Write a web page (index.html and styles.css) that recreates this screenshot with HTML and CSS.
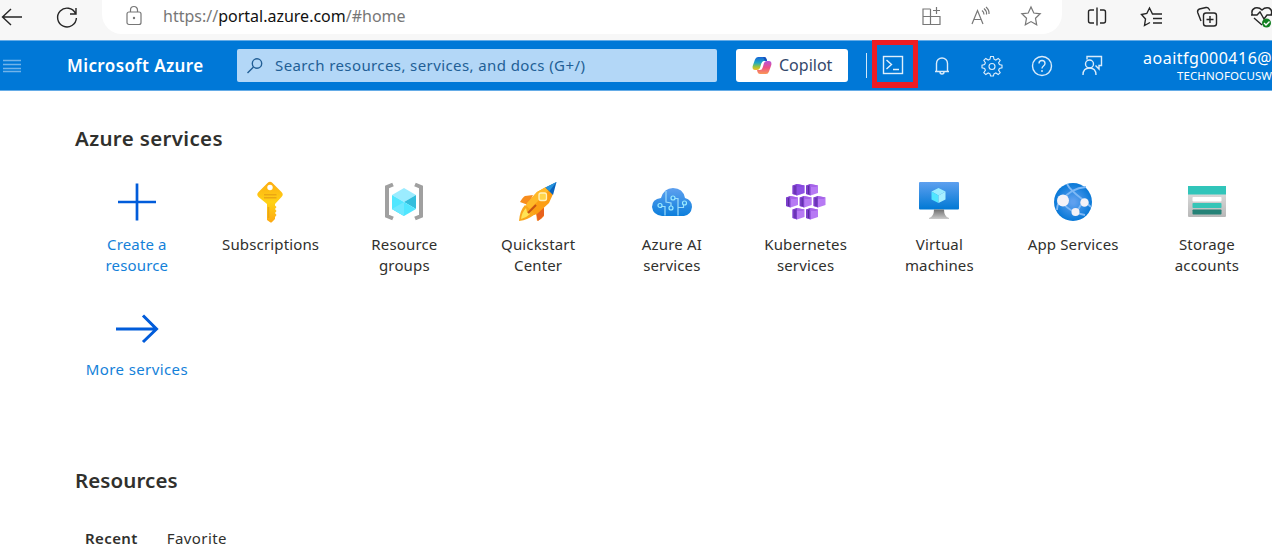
FILE: index.html
```html
<!DOCTYPE html>
<html lang="en">
<head>
<meta charset="utf-8">
<title>Home - Microsoft Azure</title>
<link rel="stylesheet" href="styles.css">
</head>
<body>
<div class="browser">
  <svg class="back" width="24" height="24" viewBox="0 0 24 24"><path d="M22 12H3M11 4l-8.500 8L11 20"/></svg>
  <svg class="reload" width="24" height="24" viewBox="0 0 24 24"><path d="M20.500 8.500A9.400 9.400 0 1 0 21.400 13M21 3v6h-6"/></svg>
  <div class="address">
    <svg class="lock" width="18" height="22" viewBox="0 0 18 22"><rect x="2" y="7" width="14" height="12.500" rx="2"/><path d="M5.500 7V5a3.500 3.500 0 0 1 7 0v2"/><circle cx="9" cy="13" r=".6"/></svg>
    <div class="url"><span class="scheme">https://</span><b>portal.azure.com</b><span class="path">/#home</span></div>
    <svg class="apps" width="22" height="22" viewBox="0 0 22 22"><path d="M10.500 4H3v15.500h17V11.500H3M10.500 4V19.500M16.500 2v7M13 5.500h7"/></svg>
    <svg class="read" width="22" height="22" viewBox="0 0 22 22"><path d="M2 19 7.500 5.500 13 19M4 14.500h7M12 5.500q2 1.500 2 4M14 3.500q3 2.500 2.500 6M16 2q3.500 3 3 7"/></svg>
    <svg class="star" width="22" height="22" viewBox="0 0 22 22"><path d="m11 2 2.800 6 6.400.8-4.700 4.500 1.200 6.500-5.700-3.200-5.700 3.200 1.200-6.500L1.800 8.800 8.200 8z"/></svg>
  </div>
  <svg class="split" width="22" height="22" viewBox="0 0 22 22"><path d="M8 4H4.500q-2 0-2 2v9q0 2 2 2H8M14 4h3.500q2 0 2 2v9q0 2-2 2H14M11 1.500v18"/></svg>
  <svg class="favs" width="24" height="22" viewBox="0 0 24 22"><path d="M17 8H12.500L9.500 2 6.800 7.500 1.500 8.500l4 4.500L4.500 19.500 10 16.500M14 8h8M13 12.500h9M13 17h9"/></svg>
  <svg class="collections" width="22" height="22" viewBox="0 0 22 22"><rect x="7.500" y="7" width="13" height="13" rx="2.500"/><path d="M14 10v7M10.500 13.500h7M5 15 1.700 6.500Q1 4 3.500 3L10 1.500q2-.4 3 1.500l.8 1.500"/></svg>
  <svg class="health" width="24" height="24" viewBox="0 0 24 24"><path d="M12 20 4 13M2.500 10Q.5 5 5 3q4-1 7 2 3-3 7-2 4 2 2 7M1 10h6l3-3 4 7 3-4h6"/><circle class="ok" cx="16.500" cy="18" r="4.500"/><path class="tick" d="m14 18 2 2 3.500-3.500"/></svg>
</div>

<header class="topbar">
  <svg class="menu" width="20" height="16" viewBox="0 0 20 16"><path d="M0 2.500h18M0 6.500h18M0 10.500h18M0 13.500h18"/></svg>
  <div class="brand">Microsoft Azure</div>
  <div class="search">
    <svg width="18" height="18" viewBox="0 0 18 18"><circle cx="11" cy="6.500" r="4.700"/><path d="M7.500 10 1.500 16"/></svg>
    <span>Search resources, services, and docs (G+/)</span>
  </div>
  <div class="copilot">
    <svg width="20" height="19" viewBox="0 0 20 19">
      <defs>
        <linearGradient id="cpA" x2="0" y2="1"><stop stop-color="#1664d8"/><stop offset=".45" stop-color="#20a9c5"/><stop offset=".75" stop-color="#9bc43c"/><stop offset="1" stop-color="#f8bd25"/></linearGradient>
        <linearGradient id="cpB" x2="0" y2="1"><stop stop-color="#b454dc"/><stop offset=".5" stop-color="#ed5085"/><stop offset="1" stop-color="#fa9855"/></linearGradient>
      </defs>
      <path fill="url(#cpA)" d="M6 1h6q2 0 2.500 2L15 5h-3Q10 5 9.300 7.500L8 12q-.7 2-3 2H3Q0 14 .7 10L3 3.500Q3.800 1 6 1"/>
      <path fill="url(#cpB)" d="M14 18H8q-2 0-2.500-2L5 14h3q2 0 2.700-2.500L12 7q.7-2 3-2h2q3 0 2.300 4L17 15.500q-.8 2.500-3 2.500"/>
      <path fill="#1750b8" d="M11 1h1q2 0 2.500 2l.6 2H14q-1.500 0-2-2z"/>
    </svg>
    <span>Copilot</span>
  </div>
  <i class="divider"></i>
  <div class="shell"><svg width="22" height="20" viewBox="0 0 22 20"><rect x="1.500" y="1.500" width="19" height="17"/><path d="m4.500 5 5 4.500-5 4.500M11 14.500h6"/></svg></div>
  <svg class="tool" width="22" height="22" viewBox="0 0 22 22"><path d="M5.500 16V8.500a5.500 5.500 0 0 1 11 0V16M4 16.500h14M9 17q0 2 2 2t2-2"/></svg>
  <svg class="tool gear" width="22" height="22" viewBox="0 0 22 22"><path d="M9.600 1.500h2.800l.6 2.700 1.800.8 2.400-1.600 2 2-1.600 2.400.8 1.800 2.600.6v2.600l-2.600.6-.8 1.800 1.600 2.400-2 2-2.400-1.600-1.800.8-.6 2.200H9.600L9 18.800 7.200 18l-2.400 1.600-2-2 1.600-2.400-.8-1.800-2.600-.6v-2.600l2.600-.6.8-1.800-1.600-2.400 2-2L7.200 5 9 4.200z"/><circle cx="11" cy="11.500" r="3"/></svg>
  <svg class="tool help" width="22" height="22" viewBox="0 0 22 22"><circle cx="11" cy="11" r="9.500"/><path d="M8 8.500Q8 5.500 11 5.500t3 3q0 1.300-1.500 2.500T11 13.500M11 15v2"/></svg>
  <svg class="tool" width="22" height="22" viewBox="0 0 22 22"><path d="M6 4.500v-3h14.500v9H18V14l-3.500-3.500"/><circle cx="8.500" cy="9" r="4"/><path d="M2 20q0-7 6.500-7t6.500 7"/></svg>
  <div class="account"><div class="user">aoaitfg000416@</div><div class="tenant">TECHNOFOCUSW</div></div>
</header>

<main>
  <h2 class="h-services">Azure services</h2>
  <div class="services">
    <div class="service link">
      <svg width="44" height="44" viewBox="0 0 44 44"><path d="M22 3.500v37M3 22h38" stroke="#015cda" stroke-width="2.700"/></svg>
      <span>Create a<br>resource</span>
    </div>
    <div class="service">
      <svg width="44" height="44" viewBox="0 0 44 44">
        <defs><linearGradient id="key" x2="0" y2="1"><stop stop-color="#fdac10"/><stop offset=".5" stop-color="#ffd216"/><stop offset="1" stop-color="#fda914"/></linearGradient></defs>
        <path fill="url(#key)" d="M18.500 3q2.500-2.500 5 0l9 9q2.500 2.500 0 5L26 24v1.500l1.500 1.500-1.500 2 1.500 2-1.500 2 1.500 2-1.500 2v2l-3.500 3.500h-1L18 40V24l-8.500-7q-2.500-2.500 0-5z"/>
        <circle cx="21" cy="7.500" r="2.700" fill="#fff"/><path d="M15 14.700h12.500M15 17.700h12.500M19.500 27v11" stroke="#eba713" stroke-width="1.500"/>
      </svg>
      <span>Subscriptions</span>
    </div>
    <div class="service">
      <svg width="44" height="44" viewBox="0 0 44 44">
        <path d="M11 4.500 5 7v29l6 2.500M33 4.500 39 7v29l-6 2.500" fill="none" stroke="#a0a0a0" stroke-width="4"/>
        <path fill="#9becff" d="m22 8 12 7-12 7-12-7z"/><path fill="#50e6ff" d="m10 15 12 7v14l-12-7z"/><path fill="#32bedd" d="m34 15-12 7 12 7z"/><path fill="#50e6ff" d="m22 22 12 7-12 7-12-7z"/><path fill="#6ee8ff" d="m10 29 12-7v14z"/>
      </svg>
      <span>Resource<br>groups</span>
    </div>
    <div class="service">
      <svg width="44" height="44" viewBox="0 0 44 44">
        <path fill="#f78d1e" d="M17 15 9 16q-2 1-5 6l8 3zM20 32l8-4v8q-2 3-7 5z"/>
        <path fill="#e8621d" d="m20 32 8-5v8q-2 3-6 6z"/>
        <path fill="#fc9e13" d="m30 7 7 7-4 9-12 11-6 2-6-6 2-7L21 12z"/>
        <path fill="#ffb928" d="m30 7 3 3L11 32l-2-2 2-7L21 12z"/>
        <path fill="#0862bd" d="m29.500 7.500 11-5.500L37 15z"/><path fill="#2693dc" d="m40.500 2-7 9-4-3.500z"/>
        <path fill="#f9a71c" d="M9 25q-5 5-6 16 9-1 16-7l-5-5z"/><path fill="#ffe455" d="M10 28q-4 4-5 11 5-1 9-5l-3-2z"/>
        <path d="m12 33 8-8" stroke="#c65312" stroke-width="2"/><rect x="23" y="13" width="7.500" height="7.500" rx="2" fill="#ffd54b" stroke="#fff2bd" stroke-width="1.300"/>
      </svg>
      <span>Quickstart<br>Center</span>
    </div>
    <div class="service">
      <svg width="44" height="44" viewBox="0 0 44 44">
        <defs><linearGradient id="cloud" x2="0" y2="1"><stop stop-color="#5ea0ef"/><stop offset="1" stop-color="#0d7fdc"/></linearGradient></defs>
        <path fill="url(#cloud)" d="M12 36Q3 35 2 27q0-8 9-9Q14 8 23 8q10 0 12 10 7 2 7 9-1 8-8 9z"/>
        <path d="M15 35.500V26.500h-3M28 35.500V18.500h-4M28 27.500h5.500v-3M16 11v11l5 1v3" fill="none" stroke="#9cdcfa" stroke-width="1.200"/>
        <g fill="#2f91e5" stroke="#9cebff" stroke-width="1.200"><circle cx="10" cy="25.500" r="2"/><circle cx="23" cy="18" r="2"/><circle cx="34.500" cy="23" r="2"/><circle cx="21" cy="28" r="2"/></g>
      </svg>
      <span>Azure AI<br>services</span>
    </div>
    <div class="service">
      <svg width="44" height="44" viewBox="0 0 44 44">
        <defs><g id="pod"><path fill="#b77af4" d="m0 1.500 4.500-1.500 7.500 1.500v7.500L4.500 11.500 0 10z"/><path fill="#7c3fcb" d="m0 1.500 4.500-1.500v11.500L0 10z"/><path d="M2.500 2v8" stroke="#5c2da1"/><path fill="#a664e8" d="m4.500 0 7.500 1.500-2 1.500H4.500z"/></g></defs>
        <use href="#pod" x="8.500" y="4"/><use href="#pod" x="22" y="4"/><use href="#pod" x="2" y="16"/><use href="#pod" x="15.700" y="16"/><use href="#pod" x="29.500" y="16"/><use href="#pod" x="8.500" y="28"/><use href="#pod" x="22" y="28"/>
        <path fill="#773adc" opacity=".65" d="m13 4 7.500 1.500V13l-7.500 2.500z"/>
      </svg>
      <span>Kubernetes<br>services</span>
    </div>
    <div class="service">
      <svg width="44" height="44" viewBox="0 0 44 44">
        <defs><linearGradient id="scr" x2="0" y2="1"><stop stop-color="#5ea0ef"/><stop offset="1" stop-color="#0078d4"/></linearGradient><linearGradient id="foot" x2="0" y2="1"><stop stop-color="#707070"/><stop offset="1" stop-color="#ccc"/></linearGradient></defs>
        <rect x="2" y="2" width="40" height="27.500" rx="1" fill="url(#scr)"/><path fill="url(#foot)" d="M17 29.500h10q0 7 5 8.500v1H12v-1q5-1.500 5-8.500"/>
        <path fill="#9becff" d="m21.500 8 7 3.500-7 4-7-4z"/><path fill="#50e6ff" d="m14.500 11.500 7 4V23l-7-3.500z"/><path fill="#a8efff" d="m28.500 11.500-7 4V23l7-3.500z"/>
      </svg>
      <span>Virtual<br>machines</span>
    </div>
    <div class="service">
      <svg width="44" height="44" viewBox="0 0 44 44">
        <defs><radialGradient id="globe"><stop offset=".1" stop-color="#5ea0ef"/><stop offset="1" stop-color="#0878d7"/></radialGradient></defs>
        <circle cx="22" cy="22" r="19" fill="url(#globe)"/>
        <path d="M16 4q3 6 15 15l9 8M35 7Q20 8 10 21q5 7 15 12l9 2M31 23l-6 10M8 22q-2 4-2 8" stroke="#7db8f5" stroke-width="1.800" fill="none"/>
        <g fill="#f4f2f7"><circle cx="12" cy="20.500" r="6"/><circle cx="33.500" cy="22.500" r="4.200"/><circle cx="24.500" cy="32" r="4"/></g>
      </svg>
      <span>App Services</span>
    </div>
    <div class="service">
      <svg width="44" height="44" viewBox="0 0 44 44">
        <defs><linearGradient id="store" x2="0" y2="1"><stop stop-color="#e2e2e2"/><stop offset="1" stop-color="#b8b8b8"/></linearGradient></defs>
        <rect x="3" y="7" width="38" height="30" rx="1" fill="url(#store)"/><path fill="#31c5ba" d="M3 6h38v8.500H3z"/><rect x="7.500" y="17" width="29" height="4.500" rx=".8" fill="#fff"/><rect x="7.500" y="23" width="29" height="5" rx=".8" fill="#36c5b7"/><rect x="7.500" y="29.500" width="29" height="5" rx=".8" fill="#258277"/>
      </svg>
      <span>Storage<br>accounts</span>
    </div>
    <div class="service link more">
      <svg width="46" height="44" viewBox="0 0 46 44"><path d="M2 22h41M29 8.500 42.500 22 29 35" fill="none" stroke="#015cda" stroke-width="3"/></svg>
      <span>More services</span>
    </div>
  </div>
  <h2 class="h-resources">Resources</h2>
  <div class="tabs"><b>Recent</b><span>Favorite</span></div>
</main>
</body>
</html>
```

FILE: styles.css
```css
* { box-sizing: border-box; }
body {
  margin: 0;
  width: 1272px;
  height: 559px;
  overflow: hidden;
  background: #fff;
  color: #30302d;
  font: 15px/21px "Noto Sans", "Open Sans", sans-serif;
}
svg { display: block; flex: none; }
.browser svg, .topbar > svg, .search svg, .shell svg { fill: none; stroke: currentColor; stroke-width: 1.4; }

.browser { display: flex; height: 40px; padding-bottom: 7px; align-items: center; background: #f7f7f7; color: #262626; }
.browser > * { flex: none; }
.back { margin-left: 0; }
.reload { margin-left: 31px; }
.address { display: flex; align-items: center; width: 960px; height: 40px; margin: -5px 0 0 23px; padding: 4px 20px 0 23px; border-radius: 0 0 20px 20px; background: #fff; color: #777; }
.browser .address svg { stroke-width: 1.2; }
.url { flex: 1; margin-left: 20px; font-size: 16px; white-space: nowrap; }
.url b { color: #111; font-weight: 400; }
.read { margin-left: 28px; }
.star { margin-left: 28px; }
.split { margin-left: 24px; }
.favs { margin-left: 32px; }
.collections { margin-left: 32px; }
.health { margin-left: 32px; }
.browser .ok { fill: #128021; stroke: none; }
.browser .tick { stroke: #fff; }

.topbar { display: flex; align-items: center; height: 51px; background: #0078d7; border-top: 1px solid #65ace7; border-bottom: 1px solid #65ace7; color: #fff; white-space: nowrap; }
.topbar > * { flex: none; }
.topbar .menu { margin-left: 3px; color: #72b3e9; stroke-width: 1.5; }
.brand { width: 170px; margin-left: 44px; font-size: 17px; font-weight: 600; letter-spacing: .4px; }
.search { display: flex; align-items: center; width: 480px; height: 33px; padding-left: 9px; gap: 11px; border-radius: 2px; background: #b3d7f7; color: #225f96; letter-spacing: .4px; }
.copilot { display: flex; align-items: center; width: 112px; height: 33px; margin-left: 19px; padding-left: 16px; gap: 7px; border-radius: 3px; background: #fff; color: #33476b; font-size: 16px; }
.divider { width: 1px; height: 25px; margin-left: 18px; background: #d1e7f8; }
.shell { display: flex; align-self: flex-start; width: 46px; height: 48px; margin: -1px 0 0 5px; padding: 11px 0 0 9px; border: 5px solid #ed1c24; border-width: 5px 5px 6px 5px; color: #e0effb; }
.shell { padding-left: 5px; padding-top: 10px; }
.tool { margin-left: 28px; color: #d9ebfa; }
.topbar > .gear { stroke-width: 1.15; }
.shell + .tool { margin-left: 13px; }
.account { width: 129px; margin-left: 40px; }
.user { height: 20px; font-size: 16px; line-height: 22px; letter-spacing: .5px; }
.tenant { margin-left: 34px; font-size: 11.5px; line-height: 17px; letter-spacing: .1px; }

main { padding-left: 70px; }
h2 { margin: 0; font-size: 20.5px; line-height: 28px; font-weight: 600; letter-spacing: .35px; }
.h-services { padding: 33px 0 0 5px; }
.services { display: grid; grid-template-columns: repeat(9, 133.75px); grid-template-rows: 127px 162px; padding-top: 28px; }
.service { display: flex; flex-direction: column; align-items: center; text-align: center; letter-spacing: .15px; }
.service span { margin-top: 10px; }
.link { color: #1481d9; }
.more { letter-spacing: .4px; }
.more span { margin-top: 8px; }
.h-resources { padding-left: 5px; margin-top: -3px; letter-spacing: .1px; }
.tabs { display: flex; gap: 29px; padding: 34px 0 0 15px; letter-spacing: .4px; }
.tabs b { font-weight: 600; }
```
